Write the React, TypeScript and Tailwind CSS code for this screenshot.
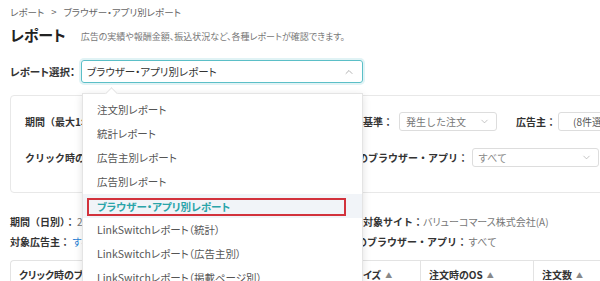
import React from 'react';
import { ChevronUp, ChevronDown } from 'lucide-react';

const reportTypes = [
  '注文別レポート',
  '統計レポート',
  '広告主別レポート',
  '広告別レポート',
  'ブラウザー・アプリ別レポート',
  'LinkSwitchレポート（統計）',
  'LinkSwitchレポート（広告主別）',
  'LinkSwitchレポート（掲載ページ別）',
];

const selected = 'ブラウザー・アプリ別レポート';

const columns = [
  { label: 'クリック時のブラウザー・アプリ', width: 'w-[297px]', sort: false },
  { label: 'デバイスサイズ', width: 'w-[113px]', sort: true },
  { label: '注文時のOS', width: 'w-[113px]', sort: true },
  { label: '注文数', width: 'w-[113px]', sort: true },
];

export default function App() {
  return (
    <div className="h-[281px] w-full overflow-hidden bg-white pl-[10px] font-['Noto_Sans_CJK_JP','Noto_Sans',sans-serif] text-[#333]">
      {/* Breadcrumb */}
      <div className="pt-[5px] text-[9.5px] leading-[14px] text-[#666] [font-feature-settings:'palt']">
        レポート<span className="mx-[7px]">&gt;</span>ブラウザー・アプリ別レポート
      </div>

      {/* Title */}
      <div className="mt-[4px] flex items-center gap-[15px] [font-feature-settings:'palt']">
        <h1 className="text-[15px] font-bold leading-[24px] text-[#222]">レポート</h1>
        <p className="pt-[3px] text-[9px] text-[#777]">
          広告の実績や報酬金額、振込状況など、各種レポートが確認できます。
        </p>
      </div>

      {/* Report select */}
      <div className="relative z-10 mt-[13px] flex h-[23px] items-center [font-feature-settings:'palt']">
        <span className="w-[71px] shrink-0 whitespace-nowrap text-[10.5px] font-bold">レポート選択：</span>
        <div className="flex h-[23px] w-[282px] shrink-0 items-center justify-between rounded-[3px] border border-[#5bbfc7] pl-[5px] pr-[7px] shadow-[0_0_0_2px_rgba(91,191,199,0.18)]">
          <span className="text-[10.5px] text-[#333]">{selected}</span>
          <ChevronUp size={12} strokeWidth={1.5} className="text-[#999]" />
        </div>

        {/* Dropdown */}
        <div className="absolute left-[72px] top-[33px] w-[281px] border border-[#e4e4e4] bg-white pt-[4px] shadow-[0_2px_8px_rgba(0,0,0,0.12)]">
          <div className="absolute -top-[5px] left-[24px] h-[9px] w-[9px] rotate-45 border-l border-t border-[#e4e4e4] bg-white" />
          {reportTypes.map((item) =>
            item === selected ? (
              <div key={item} className="flex h-[24px] items-center bg-[#f1f4f8]">
                <div className="ml-[4px] mr-[16px] mt-[2px] flex h-[18px] flex-1 items-center border-2 border-[#d2323c] pl-[8px] text-[10.5px] font-bold text-[#2aa4a9]">
                  {item}
                </div>
              </div>
            ) : (
              <div key={item} className="flex h-[24px] items-center pl-[14px] text-[10.5px] text-[#555]">
                {item}
              </div>
            ),
          )}
        </div>
      </div>

      {/* Filter panel */}
      <div className="mt-[12px] h-[98px] w-[640px] rounded-[4px] border border-[#e8e8e8] pl-[14px] pt-[16px] text-[10px]">
        <div className="flex h-[19px] items-center">
          <div className="flex w-[314px] shrink-0 items-center gap-[4px]">
            <span className="font-bold">期間（最大1年）：</span>
            <span className="rounded-[3px] border border-[#ddd] px-[5px] text-[#555]">2022/01/01 ～ 2022/01/31</span>
          </div>
          <span className="w-[54px] shrink-0 text-right font-bold">集計基準：</span>
          <div className="ml-[6px] flex h-[19px] w-[98px] shrink-0 items-center justify-between rounded-[3px] border border-[#ddd] pl-[6px] pr-[6px]">
            <span className="text-[#777]">発生した注文</span>
            <ChevronDown size={11} strokeWidth={1.5} className="text-[#aaa]" />
          </div>
          <span className="w-[59px] shrink-0 text-right font-bold">広告主：</span>
          <div className="ml-[2px] flex h-[19px] w-[110px] shrink-0 items-center rounded-[3px] border border-[#ddd] pl-[14px]">
            <span className="text-[#555]">(8件選択)</span>
          </div>
        </div>

        <div className="mt-[17px] flex h-[19px] items-center">
          <div className="flex w-[303px] shrink-0 items-center gap-[4px]">
            <span className="font-bold">クリック時のブラウザー・アプリ：</span>
            <span className="text-[#777]">すべて</span>
          </div>
          <span className="w-[140px] shrink-0 text-right font-bold">注文時のブラウザー・アプリ：</span>
          <div className="ml-[4px] flex h-[19px] w-[127px] shrink-0 items-center justify-between rounded-[3px] border border-[#ddd] pl-[5px] pr-[6px]">
            <span className="text-[#888]">すべて</span>
            <ChevronDown size={11} strokeWidth={1.5} className="text-[#aaa]" />
          </div>
        </div>
      </div>

      {/* Summary */}
      <div className="mt-[19px] text-[10px] leading-[20px]">
        <div className="flex">
          <div className="w-[353px] shrink-0">
            <span className="font-bold">期間（日別）：</span>
            <span className="ml-[2px] text-[#777]">2022/01/01 ～ 2022/01/31</span>
          </div>
          <div>
            <span className="font-bold">対象サイト：</span>
            <span className="text-[#777] [font-feature-settings:'palt']">バリューコマース株式会社(A)</span>
          </div>
        </div>
        <div className="flex">
          <div className="w-[317px] shrink-0">
            <span className="font-bold">対象広告主：</span>
            <span className="ml-[2px] text-[#2a7fd4]">すべての広告主</span>
          </div>
          <div>
            <span className="font-bold">注文時のブラウザー・アプリ：</span>
            <span className="ml-[1px] text-[#777]">すべて</span>
          </div>
        </div>
      </div>

      {/* Table header */}
      <div className="mt-[8px] flex w-[700px] rounded-t-[4px] border-l border-t border-[#e3e3e3] [font-feature-settings:'palt']">
        {columns.map((col) => (
          <div
            key={col.label}
            className={`${col.width} flex h-[36px] shrink-0 items-start gap-[4px] border-r border-[#e3e3e3] pl-[8px] pt-[7px] text-[10px] font-bold leading-[14px]`}
          >
            <span>{col.label}</span>
            {col.sort && <span className="text-[7px] font-normal text-[#888]">▲</span>}
          </div>
        ))}
      </div>
    </div>
  );
}
